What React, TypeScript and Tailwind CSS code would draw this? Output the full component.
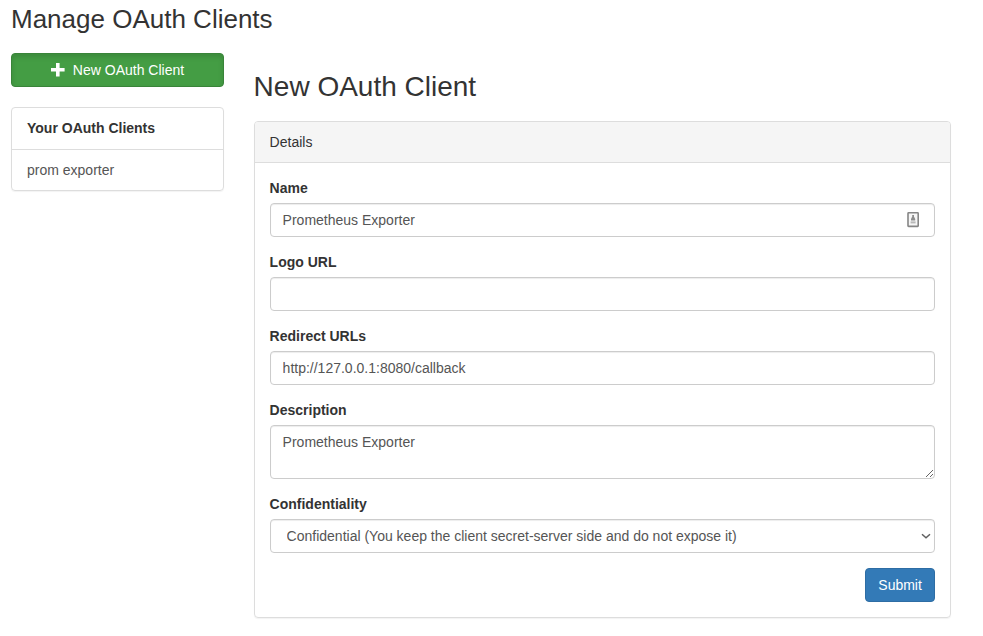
import React from "react";

const control =
  "block w-full rounded border border-[#ccc] bg-white px-3 py-1.5 text-sm leading-5 text-[#555] shadow-[inset_0_1px_1px_rgba(0,0,0,0.075)] outline-none";

function Field({ label, children }: { label: string; children: React.ReactNode }) {
  return (
    <div className="mb-[15px]">
      <label className="mb-[5px] block text-sm leading-5 font-bold">{label}</label>
      {children}
    </div>
  );
}

function ContactIcon() {
  return (
    <svg className="absolute top-[8px] right-[14.6px]" width="13" height="17" viewBox="0 0 13 17">
      <rect x="1" y="1.8" width="10.2" height="13.6" rx="0.6" fill="#f6f6f6" stroke="#868686" strokeWidth="1.6" />
      <rect x="5.2" y="4" width="1.8" height="2.4" fill="#8c8c8c" />
      <path d="M4 9.4V8l1-2h2.2l1 2v1.4z" fill="#8c8c8c" />
      <rect x="3.6" y="10.4" width="5" height="2" fill="#b8b8b8" />
    </svg>
  );
}

export default function App() {
  return (
    <div className="h-[636px] overflow-hidden bg-white pl-[11px] font-['Liberation_Sans',Arial,sans-serif] text-sm leading-5 text-[#333]">
      <h2 className="pt-[5px] text-[26px] leading-[29px]">Manage OAuth Clients</h2>
      <div className="mt-[19px] flex gap-[29.6px]">
        <aside className="w-[213px]">
          <button className="flex h-[34px] w-full items-center justify-center rounded border border-[#398439] bg-[#449d44] text-white shadow-[inset_0_3px_5px_rgba(0,0,0,0.125)]">
            <svg className="mr-2" width="14" height="14" viewBox="0 0 14 14">
              <path d="M5 0h3.6v5h5v3.6h-5v5H5v-5H0V5h5z" fill="#fff" />
            </svg>
            New OAuth Client
          </button>
          <div className="mt-5 rounded border border-[#ddd] shadow-[0_1px_1px_rgba(0,0,0,0.05)]">
            <div className="border-b border-[#ddd] px-[15px] pt-[10px] pb-[11px] font-bold">Your OAuth Clients</div>
            <div className="px-[15px] py-[10px] text-[#555]">prom exporter</div>
          </div>
        </aside>
        <main className="w-[697px]">
          <h2 className="mt-[18px] mb-[19px] text-[28px] leading-[31px]">New OAuth Client</h2>
          <section className="rounded border border-[#ddd] shadow-[0_1px_1px_rgba(0,0,0,0.05)]">
            <div className="rounded-t-[3px] border-b border-[#ddd] bg-[#f5f5f5] px-[15px] py-[10px]">Details</div>
            <div className="p-[15px]">
              <Field label="Name">
                <div className="relative">
                  <input className={control} defaultValue="Prometheus Exporter" />
                  <ContactIcon />
                </div>
              </Field>
              <Field label="Logo URL">
                <input className={control} />
              </Field>
              <Field label="Redirect URLs">
                <input className={control} defaultValue="http://127.0.0.1:8080/callback" />
              </Field>
              <Field label="Description">
                <textarea className={`${control} h-[54px]`} defaultValue="Prometheus Exporter" />
              </Field>
              <Field label="Confidentiality">
                <div className="relative">
                  <select className={`${control} appearance-none pl-4`}>
                    <option>Confidential (You keep the client secret-server side and do not expose it)</option>
                  </select>
                  <svg className="pointer-events-none absolute top-[14px] right-[3.6px]" width="10" height="7" viewBox="0 0 10 7">
                    <path d="M1 1.2l4 3.6 4-3.6" fill="none" stroke="#606060" strokeWidth="1.5" />
                  </svg>
                </div>
              </Field>
              <div className="flex justify-end">
                <button className="h-[34px] w-[70px] rounded border border-[#2e6da4] bg-[#337ab7] pl-px text-white">Submit</button>
              </div>
            </div>
          </section>
        </main>
      </div>
    </div>
  );
}
